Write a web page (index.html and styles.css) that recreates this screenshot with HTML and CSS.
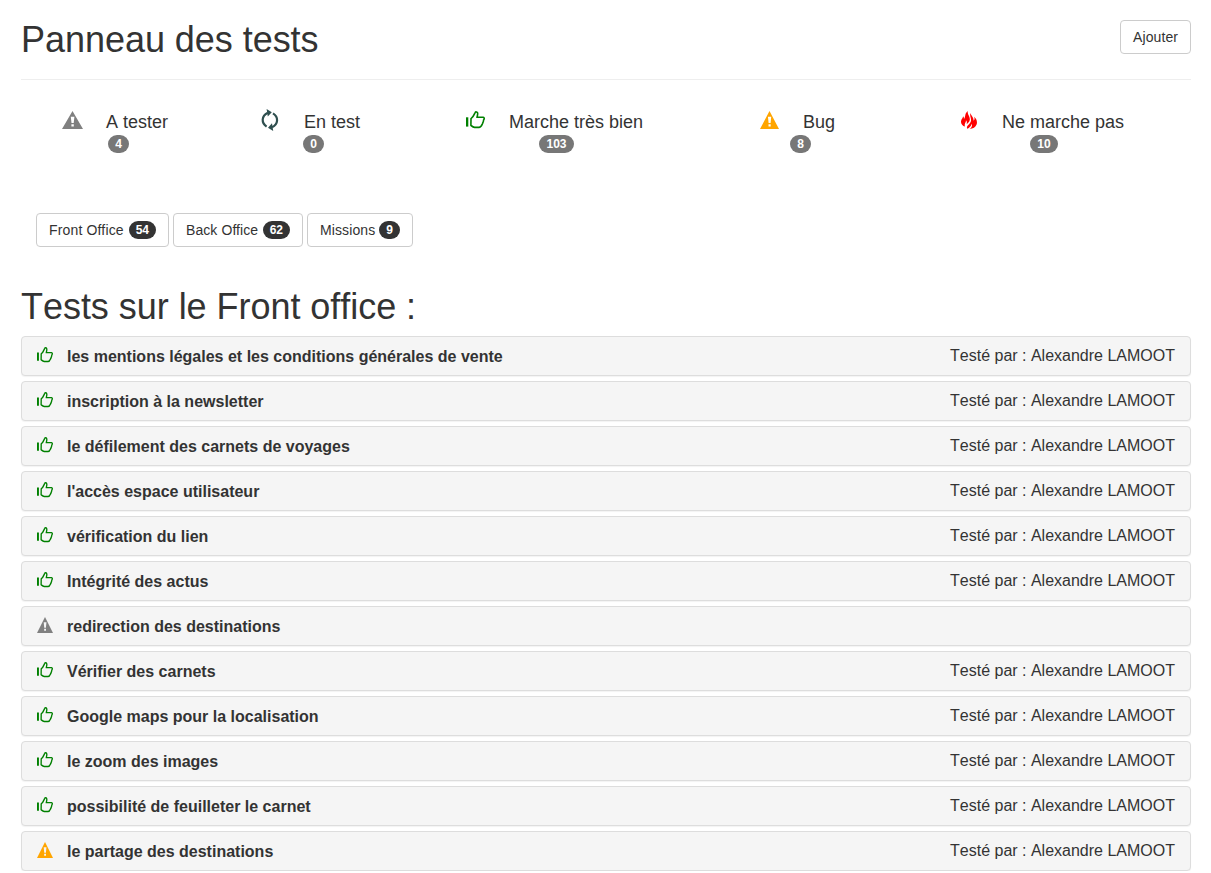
FILE: index.html
```html
<!DOCTYPE html>
<html lang="fr">
<head>
<meta charset="utf-8">
<title>Panneau des tests</title>
<link rel="stylesheet" href="styles.css">
</head>
<body>
<svg class="sprite" aria-hidden="true">
  <symbol id="warn" viewBox="0 0 21 18" preserveAspectRatio="none"><path fill="currentColor" fill-rule="evenodd" d="M10.5 0L21 18H0ZM8.8 5.8L9.5 12H11.7L12.4 5.8ZM9.4 13.2V15.5H11.8V13.2Z"/></symbol>
  <symbol id="sync" viewBox="0 0 20 22"><g fill="none" stroke="currentColor" stroke-width="2.2"><path d="M5.6 17.6C.2 14 .2 7 6.8 3.7"/><path d="M12 4.4C17.6 8 17.6 15 11 18.2"/></g><path fill="currentColor" d="M5.6 0L10.8 3.2 6.8 7.6ZM12.2 22L7 18.7 11 14.3Z"/></symbol>
  <symbol id="thumb" viewBox="0 0 19 18" preserveAspectRatio="none"><path fill="currentColor" d="M0 6.3H2.3V15.6H0Z"/><path fill="none" stroke="currentColor" stroke-width="1.6" stroke-linejoin="round" d="M5 7.6C7.3 6.2 8 4 9 1.8C9.5.6 11.4.6 11.6 2C11.9 3.5 11.3 5 11 6.3H17.2C18.6 6.7 18.4 8.2 17.6 8.9C17.6 10.6 16.8 11.7 16.3 13.1C15.5 14.8 14.7 16.4 13 16.4H8.6C7.2 16.2 6.2 15.4 4.9 14.4Z"/></symbol>
  <symbol id="fire" viewBox="0 0 16 18"><path fill="currentColor" d="M7 0C5.6 3.4 9.3 5 8.8 8.8C8.5 11 7.2 12 5.6 13.2C6.2 11.4 5.8 10.3 5 9.2C5 11.8 3 12.6 4 15.6C1 14.8-.6 12 .2 9.4C.7 7.8 1.8 7.2 2.1 5.3C2.9 6 3.1 7 2.9 8C5 6 3.2 2.4 7 0ZM9.6 2C9.8 5 13 6 12.5 9.8C13.9 9 13.7 7.3 13.1 5.8C15.5 7.8 16.6 10.8 15.6 13.5C14.6 16.2 12 17.8 8.6 18C10.8 16.6 11.4 14.8 10.8 12.8C9.8 15.2 8.8 17 6.2 17.7C5 15 7.6 14 9 12C11.8 8.2 8 5.8 9.6 2Z"/></symbol>
</svg>
<main class="page">
  <header class="page-header">
    <h1>Panneau des tests</h1>
    <button class="btn add">Ajouter</button>
  </header>
  <section class="statuses">
    <div class="status todo"><div class="line"><svg class="grey"><use href="#warn"/></svg><span>A tester</span></div><b class="badge">4</b></div>
    <div class="status running"><div class="line"><svg class="slate"><use href="#sync"/></svg><span>En test</span></div><b class="badge">0</b></div>
    <div class="status good"><div class="line"><svg class="green"><use href="#thumb"/></svg><span>Marche très bien</span></div><b class="badge">103</b></div>
    <div class="status bug"><div class="line"><svg class="orange"><use href="#warn"/></svg><span>Bug</span></div><b class="badge">8</b></div>
    <div class="status broken"><div class="line"><svg class="red"><use href="#fire"/></svg><span>Ne marche pas</span></div><b class="badge">10</b></div>
  </section>
  <nav class="tabs">
    <button class="btn front"><span>Front Office</span><b class="badge">54</b></button>
    <button class="btn back"><span>Back Office</span><b class="badge">62</b></button>
    <button class="btn missions"><span>Missions</span><b class="badge">9</b></button>
  </nav>
  <h1 class="list-title">Tests sur le Front office :</h1>
  <section class="panels">
    <div class="panel"><svg class="green"><use href="#thumb"/></svg><b>les mentions légales et les conditions générales de vente</b><span>Testé par : Alexandre LAMOOT</span></div>
    <div class="panel"><svg class="green"><use href="#thumb"/></svg><b>inscription à la newsletter</b><span>Testé par : Alexandre LAMOOT</span></div>
    <div class="panel"><svg class="green"><use href="#thumb"/></svg><b>le défilement des carnets de voyages</b><span>Testé par : Alexandre LAMOOT</span></div>
    <div class="panel"><svg class="green"><use href="#thumb"/></svg><b>l'accès espace utilisateur</b><span>Testé par : Alexandre LAMOOT</span></div>
    <div class="panel"><svg class="green"><use href="#thumb"/></svg><b>vérification du lien</b><span>Testé par : Alexandre LAMOOT</span></div>
    <div class="panel"><svg class="green"><use href="#thumb"/></svg><b>Intégrité des actus</b><span>Testé par : Alexandre LAMOOT</span></div>
    <div class="panel"><svg class="grey"><use href="#warn"/></svg><b>redirection des destinations</b></div>
    <div class="panel"><svg class="green"><use href="#thumb"/></svg><b>Vérifier des carnets</b><span>Testé par : Alexandre LAMOOT</span></div>
    <div class="panel"><svg class="green"><use href="#thumb"/></svg><b>Google maps pour la localisation</b><span>Testé par : Alexandre LAMOOT</span></div>
    <div class="panel"><svg class="green"><use href="#thumb"/></svg><b>le zoom des images</b><span>Testé par : Alexandre LAMOOT</span></div>
    <div class="panel"><svg class="green"><use href="#thumb"/></svg><b>possibilité de feuilleter le carnet</b><span>Testé par : Alexandre LAMOOT</span></div>
    <div class="panel"><svg class="orange"><use href="#warn"/></svg><b>le partage des destinations</b><span>Testé par : Alexandre LAMOOT</span></div>
  </section>
</main>
</body>
</html>
```
FILE: styles.css
```css
* { box-sizing: border-box; }
html { overflow: hidden; }
body { margin: 0; background: #fff; color: #333; font: 14px/20px "Liberation Sans", Arial, sans-serif; }
.sprite { display: none; }
.page { padding: 20px 20px 0 21px; }
.page-header { display: flex; justify-content: space-between; align-items: flex-start; height: 60px; border-bottom: 1px solid #eee; }
h1 { margin: 0; font-size: 36px; font-weight: 400; line-height: 40px; letter-spacing: -.04px; }
.btn { display: flex; align-items: center; justify-content: space-between; height: 34px; padding: 0 12px; border: 1px solid #ccc; border-radius: 4px; background: #fff; color: #333; font: inherit; white-space: nowrap; }
.add { width: 71px; letter-spacing: .1px; }
.badge { display: inline-block; min-width: 10px; height: 18px; padding: 3px 7px; border-radius: 10px; background: #777; color: #fff; font-size: 12px; line-height: 12px; text-align: center; }
.grey { color: #808080; }
.slate { color: #2f4f4f; }
.green { color: #008000; }
.orange { color: #ffa500; }
.red { color: #f00; }

.statuses { display: flex; height: 133px; padding: 30px 0 0 41px; font-size: 18px; font-kerning: none; }
.status { display: flex; flex-direction: column; align-items: center; }
.line { display: flex; align-self: stretch; height: 25px; line-height: 24px; white-space: nowrap; }
.line svg { flex: none; margin-top: 1px; width: 21px; height: 18px; }
.line span { margin-left: auto; }
.todo { width: 113px; margin-right: 86px; }
.running { width: 105px; margin-right: 99px; }
.good { width: 183px; margin-right: 112px; }
.bug { width: 81px; margin-right: 119px; }
.broken { width: 168px; }
.todo span { margin-right: 7px; }
.running span { margin-right: 6px; }
.good span { margin-right: 5px; }
.bug span { margin-right: 6px; }
.broken span { margin-right: 4px; }
.running svg { width: 20px; height: 22px; margin-top: -1px; }
.good svg { width: 19px; margin-left: 1px; }
.bug svg { width: 19px; }
.broken svg { width: 16px; margin-left: 1px; }

.tabs { display: flex; gap: 4px; height: 74px; padding-left: 15px; }
.tabs .badge { background: #333; }
.front { width: 133px; letter-spacing: .16px; }
.back { width: 130px; letter-spacing: .08px; }
.missions { width: 106px; letter-spacing: .1px; }
.btn .badge { letter-spacing: 0; }
.list-title { height: 49px; font-kerning: none; }
.panels { display: flex; flex-direction: column; gap: 5px; }
.panel { display: flex; height: 40px; padding: 9px 15px; border: 1px solid #ddd; border-radius: 4px; background: #f5f5f5; box-shadow: 0 1px 1px rgba(0,0,0,.05); font-size: 16px; line-height: 20px; }
.panel svg { width: 16px; height: 16px; margin: 1px 14px 0 0; }
.panel b { padding-top: 1px; }
.panel span { margin-left: auto; font-kerning: none; }
```
